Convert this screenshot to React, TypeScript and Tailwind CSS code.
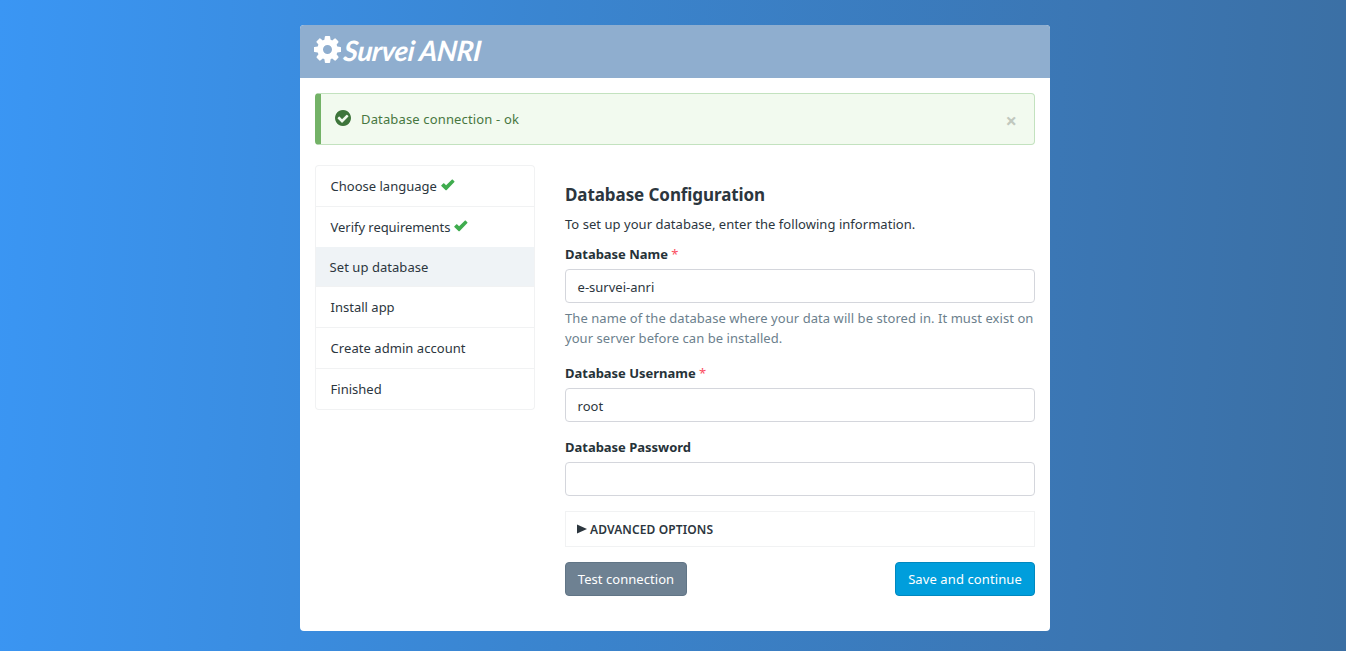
const steps = [
  { name: "Choose language", done: true, cls: "h-[41px] border-t pl-[14.6px] rounded-t", sp: "" },
  { name: "Verify requirements", done: true, cls: "h-[41px] border-t pl-[14.6px]", sp: "tracking-[-0.05px]" },
  { name: "Set up database", done: false, cls: "h-[40px] border-b bg-[#eff3f6] pl-[13.6px]", sp: "tracking-[0.05px]" },
  { name: "Install app", done: false, cls: "h-[41px] border-b pl-[14.6px]", sp: "" },
  { name: "Create admin account", done: false, cls: "h-[41px] border-b pl-[14.6px]", sp: "tracking-[0.05px]" },
  { name: "Finished", done: false, cls: "h-[41px] border-b pl-[14.6px] rounded-b", sp: "" },
];

function Cog() {
  return (
    <svg width="27" height="27" viewBox="128 128 1536 1536" fill="currentColor" className="-mt-[5px] shrink-0">
      <path d="M1152 896q0-106-75-181t-181-75-181 75-75 181 75 181 181 75 181-75 75-181zm512-109v222q0 12-8 23t-20 13l-185 28q-19 54-39 91 35 50 107 138 10 12 10 25t-9 23q-27 37-99 108t-94 71q-12 0-26-9l-138-108q-44 23-91 38-16 136-29 186-7 28-36 28h-222q-14 0-24.5-8.5t-11.5-21.5l-28-184q-49-16-90-37l-141 107q-10 9-25 9-14 0-25-11-126-114-165-168-7-10-7-23 0-12 8-23 15-21 51-66.5t54-70.5q-27-50-41-99l-183-27q-13-2-21-12.5t-8-23.5v-222q0-12 8-23t19-13l186-28q14-46 39-92-40-57-107-138-10-12-10-24 0-10 9-23 26-36 98.5-107.5t94.5-71.5q13 0 26 10l138 107q44-23 91-38 16-136 29-186 7-28 36-28h222q14 0 24.5 8.5t11.5 21.5l28 184q49 16 90 37l142-107q9-9 24-9 13 0 25 10 129 119 165 170 7 8 7 22 0 12-8 23-15 21-51 66.5t-54 70.5q26 50 41 98l183 28q13 2 21 12.5t8 23.5z" />
    </svg>
  );
}

function CheckCircle() {
  return (
    <svg width="16" height="16" viewBox="128 128 1536 1536" fill="currentColor" className="text-[#3e753b]">
      <path d="M1412 734q0-28-18-46l-91-90q-19-19-45-19t-45 19l-408 407-226-226q-19-19-45-19t-45 19l-91 90q-18 18-18 46 0 27 18 45l362 362q19 19 45 19 27 0 46-19l543-543q18-18 18-45zm252 162q0 209-103 385.5t-279.5 279.5-385.5 103-385.5-103-279.5-279.5-103-385.5 103-385.5 279.5-279.5 385.5-103 385.5 103 279.5 279.5 103 385.5z" />
    </svg>
  );
}

function Check() {
  return (
    <svg width="14" height="12" viewBox="0 0 14 12" fill="#3fac4e" className="-mt-[4px]">
      <path d="M0.2 6.6L2.4 4.3Q2.7 4.1 3 4.3L5.1 6.3L11 0.5Q11.3 0.3 11.6 0.5L13.5 2.4Q13.7 2.7 13.4 3L5.5 11.2Q5.1 11.5 4.7 11.2L0.3 7.1Q0.1 6.9 0.2 6.6Z" />
    </svg>
  );
}

function Field({ label, required, value, help }: { label: string; required?: boolean; value: string; help?: boolean }) {
  return (
    <div className="flex flex-col">
      <label className="h-5 leading-5 font-bold tracking-[-0.02px] text-[#263238]">
        {label} {required && <span className="font-normal text-[#fb4d61]">*</span>}
      </label>
      <div className="mt-[5px] flex h-[34px] items-center rounded-[4px] border border-[#d4d6dc] pt-[3px] pr-3 pl-[11.6px]">{value}</div>
      {help && (
        <p className="mt-[5px] leading-5 tracking-[0.06px] whitespace-nowrap text-[#6c7f8d]">
          The name of the database where your data will be stored in. It must exist on
          <br />
          your server before can be installed.
        </p>
      )}
    </div>
  );
}

export default function App() {
  return (
    <div className="h-[651px] overflow-hidden bg-linear-[93deg,#3a96f4,#3a85d0_40%,#3b76b3_80%,#3b6fa3] pt-[25px] font-['Noto_Sans',sans-serif] text-[13px] text-[#2c363e]">
      <main className="ml-[300px] h-[606px] w-[750px] overflow-hidden rounded-[4px] bg-white">
        <header className="flex h-[53px] items-center bg-[#8faecf] pl-[14px] text-white">
          <Cog />
          <h1 className="-mt-[3px] ml-[3px] -skew-x-6 font-['Lato',cursive] text-[28px] leading-none font-bold tracking-[-0.4px] italic">Survei ANRI</h1>
        </header>
        <div className="px-[15px] pt-[15px]">
          <div className="flex h-[52px] items-center rounded-[4px] border border-l-[6px] border-[#c3e2bf] border-l-[#73b267] bg-[#f2faef] pr-[17px] pl-[14px] text-[#47773f]">
            <div className="-mt-[2px]"><CheckCircle /></div>
            <span className="ml-[10px] pt-[2px] tracking-[0.15px]">Database connection - ok</span>
            <span className="ml-auto pt-[3px] text-[20px] leading-none font-bold text-[#c1c8be]">×</span>
          </div>
          <div className="mt-5 flex gap-[30px]">
            <nav className="w-[220px]">
              {steps.map((s) => (
                <div key={s.name} className={`flex items-center gap-1 border-x border-[#f1f2f3] pt-[2px] ${s.cls}`}>
                  <span className={s.sp}>{s.name}</span>
                  {s.done && <Check />}
                </div>
              ))}
            </nav>
            <section className="w-[470px] pt-[18px]">
              <h2 className="h-6 text-[17px] leading-6 font-bold tracking-[-0.08px]">Database Configuration</h2>
              <p className="mt-[7px] leading-5 tracking-[0.04px]">To set up your database, enter the following information.</p>
              <div className="mt-[10px] flex flex-col gap-[15px]">
                <Field label="Database Name" required value="e-survei-anri" help />
                <Field label="Database Username" required value="root" />
                <Field label="Database Password" value="" />
                <div className="flex h-9 items-center gap-[3px] border border-[#f1f2f3] pl-[11px] text-[12px] font-semibold tracking-[0.12px]">
                  <svg width="10" height="10" viewBox="0 0 10 10"><path d="M0 0.5L10 5L0 9.5Z" fill="#2c363e" /></svg>
                  <span className="pt-[2px]">ADVANCED OPTIONS</span>
                </div>
                <div className="flex justify-between text-white">
                  <button className="h-[34px] w-[122px] rounded-[4px] border border-[#617586] bg-[#6e8192] pt-[2px] tracking-[0.05px]">Test connection</button>
                  <button className="h-[34px] w-[140px] rounded-[4px] border border-[#0088bf] bg-[#009edc] pt-[2px] tracking-[0.1px]">Save and continue</button>
                </div>
              </div>
            </section>
          </div>
        </div>
      </main>
    </div>
  );
}
